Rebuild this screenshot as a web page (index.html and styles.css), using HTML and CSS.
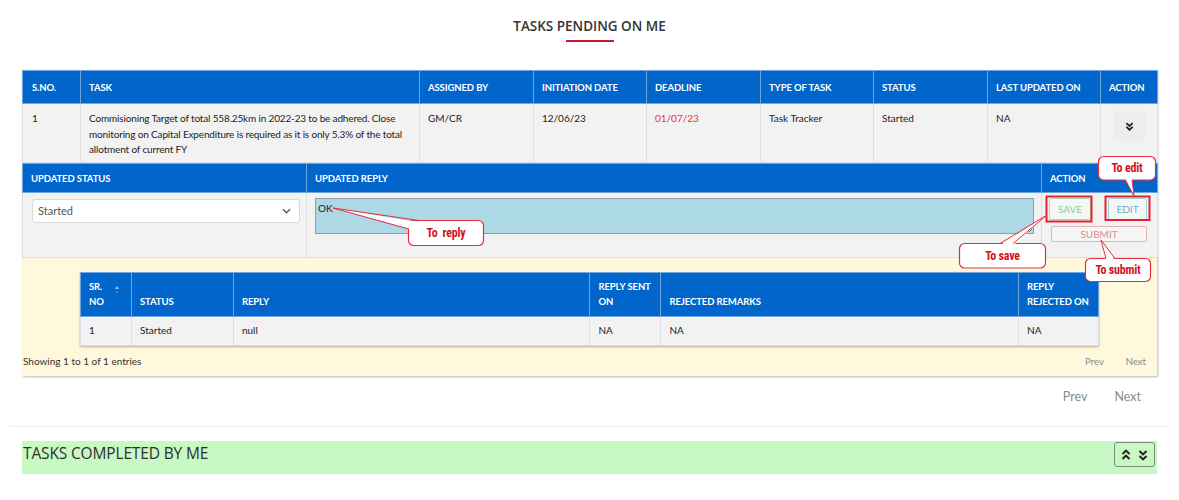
FILE: index.html
```html
<!DOCTYPE html>
<html lang="en">
<head>
<meta charset="utf-8">
<title>Tasks Pending On Me</title>
<link rel="stylesheet" href="styles.css">
</head>
<body>
<div class="page">
  <h2 class="title">TASKS PENDING ON ME</h2>
  <div class="title-bar"></div>

  <div class="task-block">
    <table class="grid main">
      <colgroup>
        <col class="w-sno"><col class="w-task"><col class="w-mid"><col class="w-mid2"><col class="w-mid"><col class="w-mid2"><col class="w-mid"><col class="w-mid2"><col class="w-act">
      </colgroup>
      <thead>
        <tr>
          <th>S.NO.</th><th>TASK</th><th>ASSIGNED BY</th><th>INITIATION DATE</th><th>DEADLINE</th><th>TYPE OF TASK</th><th>STATUS</th><th>LAST UPDATED ON</th><th>ACTION</th>
        </tr>
      </thead>
      <tbody>
        <tr>
          <td>1</td>
          <td class="task-text">Commisioning Target of total 558.25km in 2022-23 to be adhered. Close monitoring on Capital Expenditure is required as it is only 5.3% of the total allotment of current FY</td>
          <td>GM/CR</td>
          <td>12/06/23</td>
          <td class="late">01/07/23</td>
          <td>Task Tracker</td>
          <td>Started</td>
          <td>NA</td>
          <td class="act-cell">
            <span class="expand-btn">
              <svg viewBox="0 0 10 10" width="9" height="9"><polyline points="1.5,1.2 5,4.4 8.5,1.2"/><polyline points="1.5,5.4 5,8.6 8.5,5.4"/></svg>
            </span>
          </td>
        </tr>
      </tbody>
    </table>

    <table class="grid update">
      <colgroup><col class="w-ustatus"><col class="w-ureply"><col class="w-uact"></colgroup>
      <thead>
        <tr><th>UPDATED STATUS</th><th>UPDATED REPLY</th><th>ACTION</th></tr>
      </thead>
      <tbody>
        <tr>
          <td class="sel-cell">
            <div class="select">
              <span>Started</span>
              <svg viewBox="0 0 10 6" width="9" height="6"><polyline points="1,1 5,5 9,1"/></svg>
            </div>
          </td>
          <td class="reply-cell"><textarea class="reply">OK</textarea></td>
          <td class="btn-cell">
            <div class="btn-grid">
              <button class="btn save">SAVE</button>
              <button class="btn edit">EDIT</button>
              <button class="btn submit">SUBMIT</button>
            </div>
          </td>
        </tr>
      </tbody>
    </table>

    <div class="history">
      <table class="grid hist">
        <colgroup><col class="h-sr"><col class="h-status"><col class="h-reply"><col class="h-sent"><col class="h-rem"><col class="h-rej"></colgroup>
        <thead>
          <tr>
            <th class="sortable">SR. NO<span class="sort"><i class="up"></i><i class="down"></i></span></th>
            <th>STATUS</th><th>REPLY</th><th>REPLY SENT ON</th><th>REJECTED REMARKS</th><th>REPLY REJECTED ON</th>
          </tr>
        </thead>
        <tbody>
          <tr><td>1</td><td>Started</td><td>null</td><td>NA</td><td>NA</td><td>NA</td></tr>
        </tbody>
      </table>
      <div class="hist-foot">
        <span>Showing 1 to 1 of 1 entries</span>
        <div class="pager-sm"><span>Prev</span><span>Next</span></div>
      </div>
    </div>
  </div>

  <div class="pager"><span>Prev</span><span>Next</span></div>
  <hr class="sep">

  <div class="completed">
    <h3>TASKS COMPLETED BY ME</h3>
    <button class="toggle">
      <svg viewBox="0 0 10 12" width="10" height="12"><polyline points="1.5,5 5,1.6 8.5,5"/><polyline points="1.5,10 5,6.6 8.5,10"/></svg>
      <svg viewBox="0 0 10 12" width="10" height="12"><polyline points="1.5,2 5,5.4 8.5,2"/><polyline points="1.5,7 5,10.4 8.5,7"/></svg>
    </button>
  </div>

  <svg class="annot" width="1179" height="500" viewBox="0 0 1179 500">
    <rect class="mark" x="1046.5" y="196.5" width="45" height="25"/>
    <rect class="mark" x="1105.5" y="196.5" width="44" height="23.5"/>

    <rect class="bubble" x="408.5" y="220.5" width="75" height="25" rx="5"/>
    <polygon class="wedge" points="333,208 419,222.5 410.5,229"/>
    <polyline class="wedge-line" points="419,220.5 333,208 408.5,229"/>

    <rect class="bubble" x="959.5" y="243.5" width="86" height="24.5" rx="5"/>
    <polygon class="wedge" points="1047,215 1000,245.5 1013,245.5"/>
    <polyline class="wedge-line" points="1000,243.5 1047,215 1013,243.5"/>

    <rect class="bubble" x="1098.5" y="156.5" width="57" height="23.5" rx="5"/>
    <polygon class="wedge" points="1134,196 1125,178 1132,178"/>
    <polyline class="wedge-line" points="1125,180 1134,196 1132,180"/>

    <rect class="bubble" x="1085.5" y="258.5" width="65" height="23" rx="5"/>
    <polygon class="wedge" points="1101,240 1106,260.5 1115,260.5"/>
    <polyline class="wedge-line" points="1106,258.5 1101,240 1115,258.5"/>
  </svg>
  <div class="callout c-reply">To&nbsp; reply</div>
  <div class="callout c-save">To save</div>
  <div class="callout c-edit">To edit</div>
  <div class="callout c-submit">To submit</div>
</div>
</body>
</html>
```
FILE: styles.css
```css
* { box-sizing: border-box; }

body {
  margin: 0;
  background: #fff;
  color: #333;
  font-family: Lato, "Open Sans", sans-serif;
}

.page {
  position: relative;
  padding: 16px 22px 40px;
}

.title {
  margin: 0;
  text-align: center;
  font: 600 13.5px/20px "Open Sans", sans-serif;
  color: #333;
}

.title-bar {
  width: 48px;
  height: 2px;
  margin: 4px auto 0;
  background: #c8193c;
}

.task-block {
  margin-top: 28px;
  box-shadow: 1px 1px 2px rgba(0, 0, 0, 0.28);
}

/* generic grid tables */
.grid {
  width: 100%;
  border-collapse: collapse;
  table-layout: fixed;
}

.grid th {
  background: #0066cc;
  color: #fff;
  font-weight: 700;
  font-size: 9.5px;
  text-align: left;
  padding: 0 8px;
  border: 1px solid #6fa6de;
  letter-spacing: -0.1px;
}

.grid td {
  background: #f2f2f2;
  font-size: 10px;
  line-height: 15.5px;
  color: #222;
  padding: 8px 8px 0;
  vertical-align: top;
  border: 1px solid #dcdfe3;
}

/* main table */
.w-sno { width: 58px; }
.w-task { width: 339px; }
.w-mid { width: 114px; }
.w-mid2 { width: 113px; }
.w-act { width: 57px; }

.main th { height: 33px; }
.main td { height: 59px; padding-top: 7px; }
.main td:first-child, .main th:first-child { padding-left: 9px; }
.task-text { letter-spacing: -0.16px; }
.late { color: #e5352f !important; }

.act-cell { text-align: center; padding: 7px 0 0 !important; }
.expand-btn {
  display: inline-flex;
  width: 32px;
  height: 30px;
  align-items: center;
  justify-content: center;
  background: #ededed;
  border-radius: 2px;
}
.expand-btn svg polyline,
.toggle svg polyline {
  fill: none;
  stroke: #222;
  stroke-width: 2;
}

/* update table */
.w-ustatus { width: 284px; }
.w-ureply { width: 735px; }
.w-uact { width: 116px; }

.update th { height: 29px; }
.update td { height: 65px; padding: 6px 0 0; }

.sel-cell { padding: 6px 6px 0 9px !important; }
.select {
  display: flex;
  align-items: center;
  justify-content: space-between;
  height: 24px;
  padding: 0 8px 0 5px;
  background: #fff;
  border: 1px solid #dadada;
  border-radius: 3px;
  font-size: 11px;
  color: #555;
}
.select svg polyline { fill: none; stroke: #555; stroke-width: 1.4; }

.reply-cell { padding: 5px 7px 0 8px !important; }
.reply {
  display: block;
  width: 100%;
  height: 36px;
  margin: 0;
  padding: 3px 2px;
  background: #add8e6;
  border: 1px solid #8e9ea6;
  font: 10px/12px Lato, sans-serif;
  color: #222;
  resize: both;
}

.btn-cell { padding: 5px 10px 0 7px !important; }
.btn-grid {
  display: flex;
  flex-wrap: wrap;
  justify-content: space-between;
  row-gap: 6px;
}
.btn {
  height: 22px;
  padding: 0;
  background: #f6f6f6;
  border-radius: 2px;
  font: 10px/1 Lato, sans-serif;
  cursor: pointer;
}
.save { width: 42px; border: 1px solid #a6dcb1; color: #86cf94; }
.edit { width: 39px; border: 1px solid #9ed5e1; color: #5bb5cb; }
.submit {
  width: 96px;
  height: 16px;
  margin-left: 2px;
  border: 1px solid #eab0b3;
  color: #e0868c;
}

/* history */
.history {
  background: #fff8dc;
  padding-top: 14px;
}
.hist {
  width: auto;
  margin: 0 58px;
  box-shadow: 0 1px 2px rgba(0, 0, 0, 0.3);
}
.h-sr { width: 51px; }
.h-status { width: 102px; }
.h-reply { width: 357px; }
.h-sent { width: 71px; }
.h-rem { width: 358px; }
.h-rej { width: 80px; }

.hist th {
  height: 44px;
  line-height: 15px;
  vertical-align: bottom;
  padding: 0 4px 7px 8px;
}
.hist th.sortable { position: relative; padding-right: 20px; }
.sort {
  position: absolute;
  right: 12px;
  top: 13px;
  display: flex;
  flex-direction: column;
  gap: 2px;
}
.sort i {
  width: 0;
  height: 0;
  border-left: 2.5px solid transparent;
  border-right: 2.5px solid transparent;
}
.sort .up { border-bottom: 3px solid #a9c7ea; }
.sort .down { border-top: 3px solid #2f7fd1; }

.hist td {
  height: 29px;
  vertical-align: middle;
  padding: 0 8px;
}

.hist-foot {
  display: flex;
  justify-content: space-between;
  align-items: center;
  height: 30px;
  padding: 0 11px 0 1px;
  font-size: 10px;
  color: #333;
}
.pager-sm { display: flex; gap: 22px; color: #888; font-size: 9.5px; }

.pager {
  display: flex;
  justify-content: flex-end;
  gap: 27px;
  padding: 13px 16px 0 0;
  font: 12.5px/16px Lato, sans-serif;
  color: #8a8a8a;
}

.sep {
  margin: 21px -12px 0;
  border: 0;
  border-top: 1px solid #ececec;
}

.completed {
  display: flex;
  justify-content: space-between;
  align-items: flex-start;
  margin-top: 14px;
  height: 33px;
  padding: 1px 2px 0 1px;
  background: #c8f8c3;
}
.completed h3 {
  margin: 1px 0 0;
  font: 500 15.5px/20px "Open Sans", sans-serif;
  color: #2f2f2f;
  letter-spacing: -0.15px;
}
.toggle {
  display: flex;
  align-items: center;
  justify-content: center;
  gap: 7px;
  width: 41px;
  height: 25px;
  padding: 0;
  background: transparent;
  border: 1px solid #7b8a7b;
  border-radius: 3px;
}

/* annotation overlay */
.annot {
  position: absolute;
  top: 0;
  left: 0;
  pointer-events: none;
}
.mark { fill: none; stroke: #e0242f; stroke-width: 2; }
.bubble { fill: #fff; stroke: #e5303c; stroke-width: 1.2; }
.wedge { fill: #fff; stroke: none; }
.wedge-line { fill: none; stroke: #e5303c; stroke-width: 1; }

.callout {
  position: absolute;
  display: flex;
  align-items: center;
  justify-content: center;
  font: 700 12px/1 "Liberation Sans Narrow", "Roboto Condensed", "DejaVu Sans Condensed", "Liberation Sans", sans-serif;
  font-stretch: condensed;
  color: #d3121f;
  letter-spacing: -0.2px;
}
.c-reply { left: 408px; top: 220px; width: 76px; height: 26px; }
.c-save { left: 959px; top: 243px; width: 87px; height: 25px; }
.c-edit { left: 1098px; top: 156px; width: 58px; height: 24px; }
.c-submit { left: 1085px; top: 258px; width: 66px; height: 24px; }
```
